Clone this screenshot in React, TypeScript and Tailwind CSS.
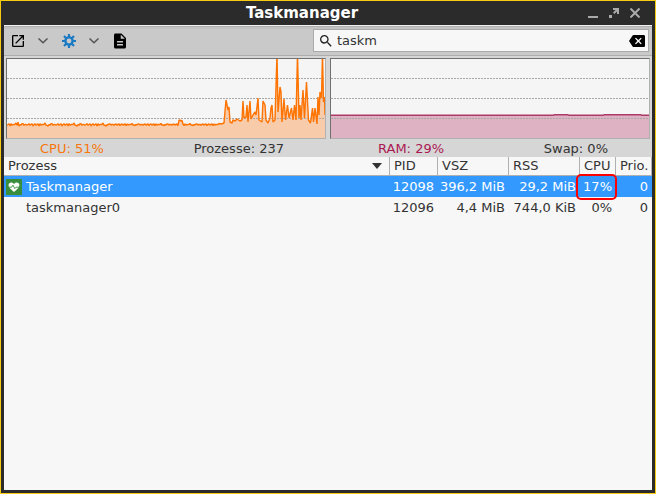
import React, { useState } from 'react'
import { MdBackspace, MdDescription, MdOpenInNew, MdSearch } from 'react-icons/md'

const processes = [
  { name: 'Taskmanager', pid: '12098', vsz: '396,2 MiB', rss: '29,2 MiB', cpu: '17%', prio: '0' },
  { name: 'taskmanager0', pid: '12096', vsz: '4,4 MiB', rss: '744,0 KiB', cpu: '0%', prio: '0' },
]

// idle part of the cpu curve, one sample per unit
const noise = [1, -1, 0, 1, 0, -2, 1, 0, 2, -1, 0, 1, 1, 0, -1, 0, 1, 0, -1, 1, 0, 2, -1, 0, 1, -1, 2, 0, -1]
const idle = Array.from({ length: 213 }, (_, i) => {
  const bump = i > 171 && i < 176 ? 4 : 0
  const peak = i === 11 ? 3 : 0
  return `${i},${65.5 + noise[(i * 7) % 29] * (i > 100 ? 0.5 : 0.8) - bump - peak}`
}).join(' ')

const load =
  '214,65 217,64 219,41 221,51 222,48 223,63 225,64 226,61 228,62 230,60 233,62 235,61 236,42 237,59 239,58 240,46 241,63 243,42 244,60 246,56 248,53 249,56 251,39 252,61 255,63 256,42 258,46 259,61 261,64 263,59 264,49 265,46 266,63 268,61 270,-5 271,53 273,28 274,33 275,63 277,40 278.5,61 280.5,46 282,59 284.5,49 286,61 287.5,46 289,61 290.5,-5 292,59 293,46 294,61 296,31 297.5,59 299.5,23 301.5,61 303.5,64 305.5,49 306.5,63 308,49 310,65 311,38 312,56 313,33 314.5,39 315.5,-5 316.5,43 317.5,38 318,56'

const cpuLine = `${idle} ${load}`
const ramLine = '0,56.3 222,56.3 223,55.8 237,55.8 238,56.3 272,56.3 273,55.8 310,55.8 311,56.3 318,56.3'

type ChartProps = { line: string; stroke: string; fill: string; label: string }

const Chart = ({ line, stroke, fill, label }: ChartProps) => {
  return (
    <div className="border border-t-[#707070] border-l-[#707070] border-r-[#b0b0b0] border-b-[#b0b0b0] bg-[#f5f5f5]">
      <svg viewBox="0 0 318 79" preserveAspectRatio="none" className="block h-[79px] w-full" role="img" aria-label={label}>
        <polygon points={`0,79 ${line} 318,79`} fill={fill} />
        <path d="M0 19.5H318M0 39.5H318M0 59.5H318" stroke="#a8a8a8" strokeDasharray="2 1" />
        <polyline points={line} fill="none" stroke={stroke} strokeWidth="1.4" strokeLinejoin="bevel" />
      </svg>
    </div>
  )
}

const Chevron = () => (
  <svg viewBox="0 0 10 6" className="h-[6px] w-[10px]" fill="none" stroke="#555" strokeWidth="1.5">
    <path d="M0.5 0.5L5 4.8L9.5 0.5" />
  </svg>
)

const Gear = () => (
  <svg viewBox="0 0 14 14" className="size-[14px]" fill="none" stroke="#1a7ac4">
    <circle cx="7" cy="7" r="3.6" strokeWidth="2.4" />
    <path d="M7 0v3M7 11v3M0 7h3M11 7h3M2 2l2.2 2.2M9.8 9.8L12 12M2 12l2.2-2.2M9.8 4.2L12 2" strokeWidth="2.2" />
  </svg>
)

const AppIcon = () => (
  <svg viewBox="0 0 16 16" className="size-4 shrink-0">
    <rect width="16" height="16" fill="#388e3c" />
    <path d="M8 13L3.6 8.9C1.6 6.8 2.8 3.6 5.2 3.6C6.5 3.6 7.4 4.2 8 5.1C8.6 4.2 9.5 3.6 10.8 3.6C13.2 3.6 14.4 6.8 12.4 8.9Z" fill="#fff" />
    <path d="M2 8.2H5.6L7 6.2L8.8 9.6L10 8.2H14" fill="none" stroke="#388e3c" strokeWidth="0.9" />
  </svg>
)

const TitleBar = () => {
  return (
    <header className="flex h-6 shrink-0 items-center">
      <h1 className="flex-1 pl-3 text-center text-[15px] leading-6 font-bold text-white">Taskmanager</h1>
      <div className="flex gap-[11px] pr-3 text-[#aaa]">
        <button type="button" aria-label="Minimieren">
          <svg viewBox="0 0 10 10" className="size-[10px]"><path d="M0 8h10v2H0z" fill="currentColor" /></svg>
        </button>
        <button type="button" aria-label="Maximieren">
          <svg viewBox="0 0 10 10" className="size-[10px]" fill="currentColor">
            <path d="M4 0h6v6H8V3.4L5.4 6L4 4.6L6.6 2H4zM0 7h3v3H0z" />
          </svg>
        </button>
        <button type="button" aria-label="Schließen">
          <svg viewBox="0 0 10 10" className="size-[10px]" stroke="currentColor" strokeWidth="2"><path d="M0.5 0.5L9.5 9.5M9.5 0.5L0.5 9.5" /></svg>
        </button>
      </div>
    </header>
  )
}

const Toolbar = ({ query, setQuery }: { query: string; setQuery: (q: string) => void }) => {
  return (
    <div className="flex h-[31px] shrink-0 items-center border-t border-b border-t-[#f0f0f0] border-b-[#adadad] bg-[#c9c9c9] pr-[3px] pl-[6px] shadow-[inset_0_1px_0_#b0b0b0,inset_0_3px_0_#c2c2c2]">
      <button type="button" aria-label="Prozess starten" className="text-black"><MdOpenInNew size={16} /></button>
      <button type="button" aria-label="Startoptionen" className="ml-3"><Chevron /></button>
      <button type="button" aria-label="Einstellungen" className="ml-[14px]"><Gear /></button>
      <button type="button" aria-label="Weitere Einstellungen" className="ml-[13px]"><Chevron /></button>
      <button type="button" aria-label="Protokoll" className="ml-3 text-black"><MdDescription size={18} /></button>
      <label className="ml-auto flex h-[23px] w-[336px] items-center border border-[#aaa] bg-[#f7f7f7] pr-[3px] pl-1">
        <MdSearch size={16} className="text-[#222]" aria-hidden />
        <input
          type="text"
          aria-label="Suchen"
          value={query}
          onChange={(e) => setQuery(e.target.value)}
          className="ml-[3px] min-w-0 flex-1 bg-transparent text-[13px] leading-5 text-[#333] outline-none"
        />
        <button type="button" aria-label="Suche leeren" onClick={() => setQuery('')} className="text-black"><MdBackspace size={16} /></button>
      </label>
    </div>
  )
}

const App = () => {
  const [query, setQuery] = useState('taskm')
  const rows = processes.filter((p) => p.name.toLowerCase().includes(query.toLowerCase()))

  return (
    <div className="flex min-h-screen flex-col border border-[#f8cb10] bg-[#2b2b2b] px-[3px] pb-[3px] font-['DejaVu_Sans',sans-serif] text-[13px] text-[#333]">
      <TitleBar />
      <Toolbar query={query} setQuery={setQuery} />

      <section className="grid shrink-0 grid-cols-2 gap-1 bg-[#d6d6d6] px-[2px] pt-[2px]">
        <div>
          <Chart line={cpuLine} stroke="#ff7300" fill="#f8cbaa" label="CPU-Verlauf" />
          <div className="flex h-[18px] justify-between pr-[42px] pl-[34px] leading-[19px]">
            <span className="text-[#f8760b]">CPU: 51%</span>
            <span>Prozesse: 237</span>
          </div>
        </div>
        <div>
          <Chart line={ramLine} stroke="#ab3a66" fill="#dfb2c3" label="RAM-Verlauf" />
          <div className="flex h-[18px] justify-between pr-[42px] pl-12 leading-[19px]">
            <span className="text-[#ab1852]">RAM: 29%</span>
            <span>Swap: 0%</span>
          </div>
        </div>
      </section>

      <main className="flex-1 bg-[#f7f7f7]">
        <table className="w-full table-fixed border-separate border-spacing-0 whitespace-nowrap">
          <colgroup>
            <col />
            <col className="w-12" />
            <col className="w-[71px]" />
            <col className="w-[71px]" />
            <col className="w-9" />
            <col className="w-9" />
          </colgroup>
          <thead>
            <tr className="h-[19px] text-left leading-[18px] *:border-r *:border-b *:border-r-[#b0b0b0] *:border-b-[#b0b0b0] *:p-0 *:pl-1 *:font-normal">
              <th>
                <div className="flex items-center justify-between pr-[7px]">
                  Prozess
                  <svg viewBox="0 0 10 6" className="h-[6px] w-[10px]"><path d="M0 0h10L5 6z" fill="#333" /></svg>
                </div>
              </th>
              <th>PID</th>
              <th>VSZ</th>
              <th>RSS</th>
              <th>CPU</th>
              <th>Prio.</th>
            </tr>
          </thead>
          <tbody>
            {rows.map((p) => {
              const selected = p.name === 'Taskmanager'
              return (
                <tr key={p.pid} className={`h-[21px] text-right leading-[21px] *:p-0 *:pr-1 ${selected ? 'bg-[#3399ff] text-white' : ''}`}>
                  <td>
                    <div className="flex items-center gap-1 pl-[2px]">
                      {selected ? <AppIcon /> : <span className="size-4" />}
                      {p.name}
                    </div>
                  </td>
                  <td>{p.pid}</td>
                  <td>{p.vsz}</td>
                  <td>{p.rss}</td>
                  <td className="relative">
                    {p.cpu}
                    {selected && <span className="absolute -top-[2px] -right-px -bottom-[3px] -left-1 rounded-[5px] border-2 border-[#f00]" />}
                  </td>
                  <td>{p.prio}</td>
                </tr>
              )
            })}
          </tbody>
        </table>
      </main>
    </div>
  )
}

export default App
